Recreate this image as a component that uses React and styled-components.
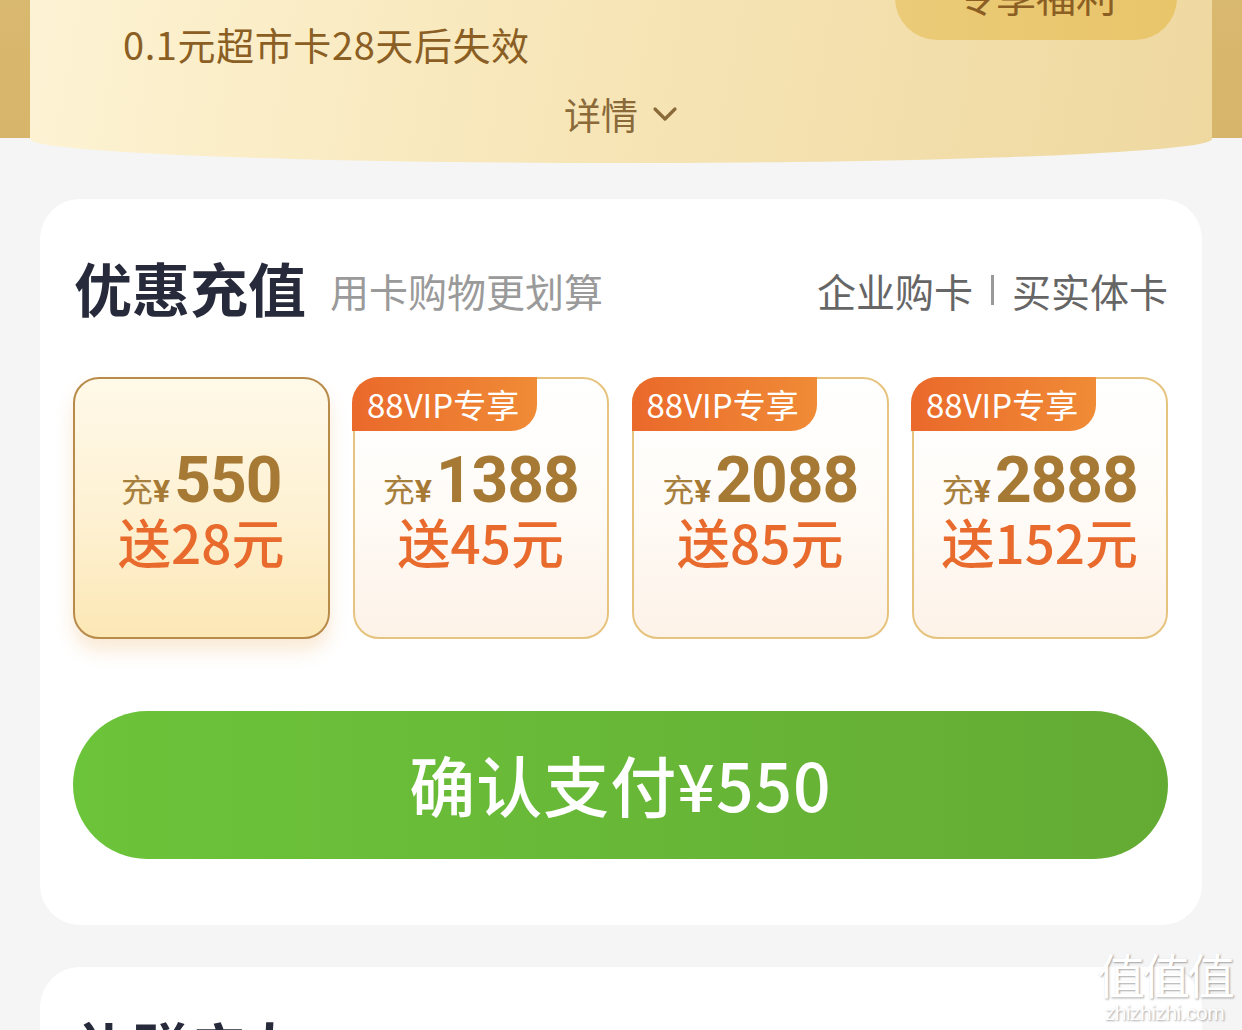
import React, { useState } from "react";
import styled, { createGlobalStyle, css } from "styled-components";

const GlobalStyle = createGlobalStyle`
  html, body {
    margin: 0;
    padding: 0;
    background: #f5f5f5;
    font-family: "Noto Sans CJK SC", "Noto Sans", sans-serif;
    overflow: hidden;
  }
`;

const Page = styled.div`
  position: relative;
  width: 1242px;
  min-height: 1030px;
  background: #f5f5f5;
`;

const HeaderBg = styled.div`
  background: linear-gradient(to bottom, #d9b96f 0, #d7b56a 138px, transparent 138px);
  padding: 0 30px;
`;

const Banner = styled.div`
  height: 163px;
  overflow: hidden;
  background: linear-gradient(100deg, #fdf3d4 0%, #f7e6b8 45%, #efd8a0 100%);
  border-radius: 0 0 50% 50% / 0 0 24px 24px;
  box-sizing: border-box;
`;

const BannerTop = styled.div`
  display: flex;
  justify-content: space-between;
  align-items: flex-start;
  height: 66px;
`;

const Expire = styled.div`
  margin: 21px 0 0 93px;
  font-size: 38px;
  line-height: 46px;
  letter-spacing: 0.6px;
  color: #8b5e24;
`;

const PerkButton = styled.div`
  margin: -50px 35px 0 0;
  width: 282px;
  height: 90px;
  border-radius: 0 0 42px 42px;
  background: linear-gradient(90deg, #ebcb78, #e9c56a);
  display: flex;
  align-items: center;
  justify-content: center;
  font-size: 40px;
  color: #8b5e24;
`;

const Detail = styled.div`
  margin-top: 26px;
  display: flex;
  justify-content: center;
  align-items: center;
  gap: 14px;
  font-size: 37px;
  line-height: 44px;
  color: #8b6a3a;
`;

const Card = styled.div`
  margin: 36px 40px 0;
  background: #fff;
  border-radius: 40px;
  padding: 56px 34px 66px 33px;
`;

const NextCard = styled(Card)`
  margin-top: 42px;
  padding-top: 48px;
  height: 300px;
  border-radius: 40px 40px 0 0;
`;

const TitleRow = styled.div`
  display: flex;
  align-items: center;
  height: 64px;
`;

const Title = styled.h2`
  margin: 0 0 0 1px;
  font-size: 58px;
  line-height: 64px;
  font-weight: 700;
  color: #272a3a;
`;

const Sub = styled.span`
  margin-left: 24px;
  font-size: 39px;
  color: #9a9a9a;
  padding-top: 6px;
`;

const Links = styled.div`
  margin-left: auto;
  display: flex;
  align-items: center;
  gap: 18px;
  font-size: 39px;
  color: #666;
  padding-top: 6px;
`;

const Divider = styled.span`
  width: 3px;
  height: 30px;
  background: #999;
`;

const Options = styled.div`
  margin-top: 58px;
  display: grid;
  grid-template-columns: repeat(4, 1fr);
  gap: 23px;
`;

const Option = styled.div`
  position: relative;
  height: 262px;
  box-sizing: border-box;
  border-radius: 26px;
  border: 2.5px solid #e6c47f;
  background: linear-gradient(to bottom, #ffffff 0%, #fffcf8 45%, #fdf2e8 100%);
  display: flex;
  flex-direction: column;
  align-items: center;
  justify-content: center;
  ${(p) =>
    p.$active &&
    css`
      border-color: #b98b4a;
      background: linear-gradient(to bottom, #fff9e9 0%, #fef1d2 55%, #fce7b5 100%);
      box-shadow: 0 12px 18px rgba(232, 160, 70, 0.22);
    `}
`;

const Badge = styled.div`
  position: absolute;
  top: -2.5px;
  left: -2.5px;
  height: 54px;
  padding: 0 18px 0 15px;
  display: flex;
  align-items: center;
  border-radius: 26px 0 26px 0;
  background: linear-gradient(90deg, #ea692b, #f08b36);
  color: #fff;
  font-size: 33px;
  font-weight: 400;
`;

const Price = styled.div`
  display: flex;
  align-items: baseline;
  height: 62px;
  line-height: 62px;
  margin-top: 4px;
  color: #a67a35;
`;

const Prefix = styled.span`
  font-size: 32px;
  color: #a8803e;
`;

const Yen = styled.span`
  font-family: Roboto, "Liberation Sans", sans-serif;
  font-size: 32px;
  font-weight: 700;
  margin-right: 4px;
`;

const Amount = styled.span`
  font-family: Roboto, "Liberation Sans", sans-serif;
  font-weight: 700;
  font-size: 64px;
  letter-spacing: -1px;
`;

const Bonus = styled.div`
  font-size: 53px;
  line-height: 58px;
  font-weight: 500;
  color: #e86b2d;
`;

const PayButton = styled.button`
  display: flex;
  align-items: center;
  justify-content: center;
  width: 100%;
  height: 148px;
  margin-top: 72px;
  border: 0;
  border-radius: 74px;
  background: linear-gradient(90deg, #6cc43a, #64ab34);
  color: #fff;
  font-family: "Noto Sans CJK SC", sans-serif;
  font-size: 66px;
  font-weight: 500;
  letter-spacing: 1px;
  padding-bottom: 6px;
`;

const Watermark = styled.div`
  position: absolute;
  right: 10px;
  top: 944px;
  display: flex;
  flex-direction: column;
  align-items: center;
  color: #fff;
  text-shadow: 1px 1px 2px rgba(0, 0, 0, 0.35);
`;

const WmBig = styled.span`
  font-size: 48px;
  line-height: 58px;
  letter-spacing: -3px;
`;

const WmSmall = styled.span`
  font-family: "Liberation Sans", sans-serif;
  font-size: 21px;
  line-height: 22px;
  letter-spacing: -0.5px;
`;

const plans = [
  { pay: "550", bonus: "28", vip: false },
  { pay: "1388", bonus: "45", vip: true },
  { pay: "2088", bonus: "85", vip: true },
  { pay: "2888", bonus: "152", vip: true },
];

const Chevron = () => (
  <svg width="26" height="16" viewBox="0 0 26 16">
    <path d="M3 3 L13 13 L23 3" fill="none" stroke="#8b6a3a" strokeWidth="3.2" strokeLinecap="round" strokeLinejoin="round" />
  </svg>
);

export default function App() {
  const [active, setActive] = useState(0);
  return (
    <Page>
      <GlobalStyle />
      <HeaderBg>
        <Banner>
          <BannerTop>
            <Expire>0.1元超市卡28天后失效</Expire>
            <PerkButton>专享福利</PerkButton>
          </BannerTop>
          <Detail>
            详情 <Chevron />
          </Detail>
        </Banner>
      </HeaderBg>

      <Card>
        <TitleRow>
          <Title>优惠充值</Title>
          <Sub>用卡购物更划算</Sub>
          <Links>
            <span>企业购卡</span>
            <Divider />
            <span>买实体卡</span>
          </Links>
        </TitleRow>
        <Options>
          {plans.map((p, i) => (
            <Option key={p.pay} $active={i === active} onClick={() => setActive(i)}>
              {p.vip && <Badge>88VIP专享</Badge>}
              <Price>
                <Prefix>充</Prefix>
                <Yen>¥</Yen>
                <Amount>{p.pay}</Amount>
              </Price>
              <Bonus>送{p.bonus}元</Bonus>
            </Option>
          ))}
        </Options>
        <PayButton>确认支付¥{plans[active].pay}</PayButton>
      </Card>

      <NextCard>
        <TitleRow>
          <Title>礼赠亲友</Title>
        </TitleRow>
      </NextCard>

      <Watermark>
        <WmBig>值值值</WmBig>
        <WmSmall>zhizhizhi.com</WmSmall>
      </Watermark>
    </Page>
  );
}
